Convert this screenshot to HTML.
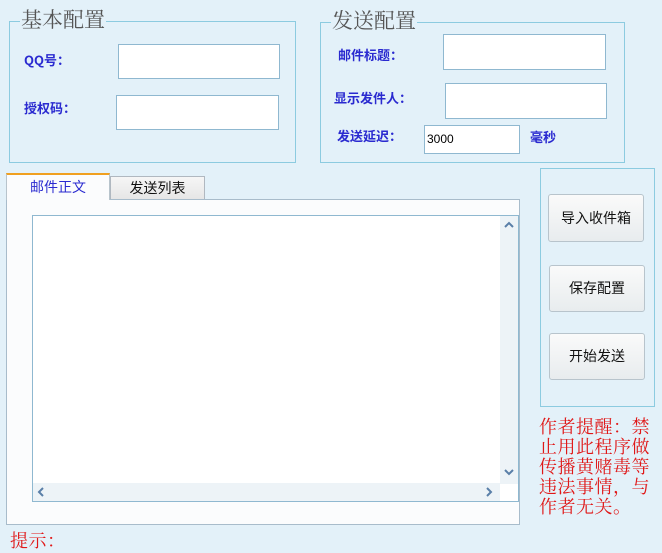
<!DOCTYPE html>
<html><head><meta charset="utf-8"><style>
*{margin:0;padding:0;box-sizing:border-box}
body{width:662px;height:550px;background:#e3f1f9;position:relative;overflow:hidden;font-family:"Liberation Sans","Noto Sans CJK SC",sans-serif}
.a{position:absolute}
.grp{position:absolute;border:1px solid #8ccbe0}
.gt{position:absolute;background:#e3f1f9;color:#555;font-family:"Liberation Serif","Noto Serif CJK SC",serif;font-size:21px;line-height:22px;padding:0 1px}
.lb{position:absolute;color:#2a2ad0;font-size:13px;line-height:16px;font-weight:bold;font-family:"Noto Sans CJK SC",sans-serif}
.in{position:absolute;background:#fff;border:1px solid #8fb8d0}
.btn{position:absolute;border:1px solid #b8c4cc;border-radius:3px;background:linear-gradient(#fafafa,#e8ecee);font-size:14px;color:#111;text-align:center}
.red{position:absolute;color:#e01818;font-family:"Noto Serif CJK SC",serif;font-size:18px;line-height:20px;white-space:nowrap;letter-spacing:0.5px}
</style></head><body>
<div class="grp" style="left:9px;top:21px;width:287px;height:142px"></div>
<div class="gt" style="left:20px;top:9px">基本配置</div>
<div class="lb" style="left:24px;top:52px">QQ号：</div>
<div class="in" style="left:118px;top:44px;width:162px;height:35px"></div>
<div class="lb" style="left:24px;top:100px">授权码：</div>
<div class="in" style="left:116px;top:95px;width:163px;height:35px"></div>

<div class="grp" style="left:320px;top:22px;width:305px;height:141px"></div>
<div class="gt" style="left:331px;top:10px">发送配置</div>
<div class="lb" style="left:338px;top:47px">邮件标题：</div>
<div class="in" style="left:443px;top:34px;width:163px;height:36px"></div>
<div class="lb" style="left:334px;top:90px">显示发件人：</div>
<div class="in" style="left:445px;top:83px;width:162px;height:36px"></div>
<div class="lb" style="left:337px;top:128px">发送延迟：</div>
<div class="in" style="left:424px;top:125px;width:96px;height:29px;font-size:12px;line-height:27px;padding-left:2px">3000</div>
<div class="lb" style="left:530px;top:129px">毫秒</div>

<div class="a" style="left:6px;top:199px;width:514px;height:326px;background:#fbfcfd;border:1px solid #a8bccb"></div>
<div class="a" style="left:6px;top:173px;width:104px;height:27px;background:#fbfcfd;border:1px solid #b8c4cc;border-top:2px solid #f0a020;border-bottom:none;color:#2a2ad0;font-size:14px;text-align:center;line-height:24px">邮件正文</div>
<div class="a" style="left:110px;top:176px;width:95px;height:23px;background:linear-gradient(#f6f6f6,#e6e6e6);border:1px solid #b0b8c0;border-bottom:none;font-size:14px;text-align:center;line-height:22px;color:#111">发送列表</div>
<div class="a" style="left:32px;top:215px;width:487px;height:287px;background:#fff;border:1px solid #8fb8d0"></div>
<div class="a" style="left:500px;top:216px;width:18px;height:268px;background:#edf3f7"></div>
<div class="a" style="left:33px;top:483px;width:467px;height:18px;background:#edf3f7"></div>
<svg class="a" style="left:500px;top:216px" width="18" height="268"><path d="M5 11 L9 7 L13 11" stroke="#5a7fa8" stroke-width="2" fill="none"/><path d="M5 254 L9 258 L13 254" stroke="#5a7fa8" stroke-width="2" fill="none"/></svg>
<svg class="a" style="left:33px;top:483px" width="467" height="18"><path d="M10 5 L6 9 L10 13" stroke="#5a7fa8" stroke-width="2" fill="none"/><path d="M454 5 L458 9 L454 13" stroke="#5a7fa8" stroke-width="2" fill="none"/></svg>

<div class="grp" style="left:540px;top:168px;width:115px;height:239px"></div>
<div class="btn" style="left:548px;top:194px;width:96px;height:48px;line-height:46px">导入收件箱</div>
<div class="btn" style="left:549px;top:265px;width:96px;height:47px;line-height:45px">保存配置</div>
<div class="btn" style="left:549px;top:333px;width:96px;height:47px;line-height:45px">开始发送</div>

<div class="red" style="left:539px;top:416px">作者提醒：禁<br>止用此程序做<br>传播黄赌毒等<br>违法事情，与<br>作者无关。</div>
<div class="red" style="left:10px;top:530px">提示：</div>
</body></html>
